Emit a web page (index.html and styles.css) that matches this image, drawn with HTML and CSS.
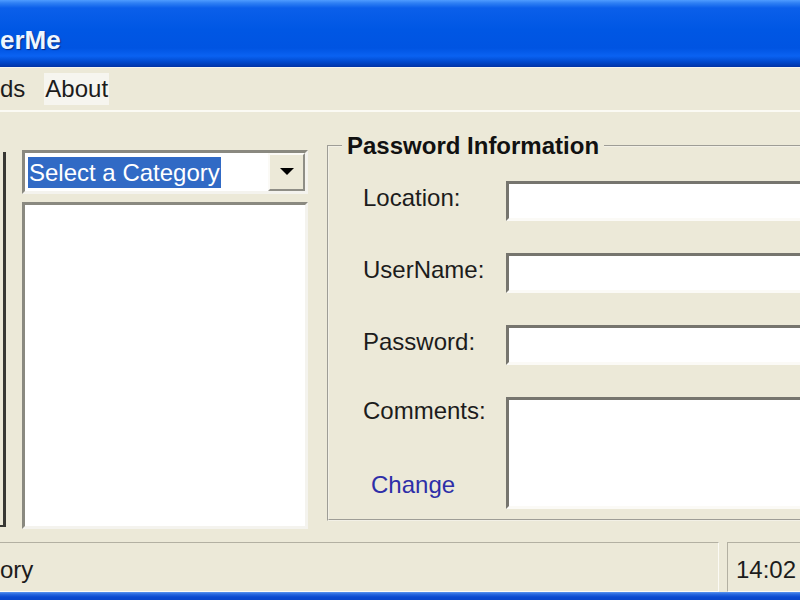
FILE: index.html
```html
<html lang="en">
<head>
    <meta charset="UTF-8">
    <meta name="viewport" content="width=device-width, initial-scale=1.0">
    <title>RememberMe</title>
    <link rel="stylesheet" href="styles.css">
</head>
<body>
    <div class="window">
        <div class="titlebar">
            <span class="title">erMe</span>
        </div>
        <div class="menubar">
            <span class="menu-item first">ds</span>
            <span class="menu-item about">About</span>
        </div>
        <div class="main">
            <div class="left-edge"></div>
            <div class="category">
                <div class="combo">
                    <span class="combo-text">Select a Category</span>
                    <span class="combo-btn">
                        <svg width="14" height="8" viewBox="0 0 14 8"><path d="M0 0H14L7 7Z" fill="#000"/></svg>
                    </span>
                </div>
                <div class="listbox"></div>
            </div>
            <fieldset class="group">
                <legend>Password Information</legend>
                <div class="fields">
                    <label>Location:</label>
                    <div class="field"></div>
                    <label>UserName:</label>
                    <div class="field"></div>
                    <label>Password:</label>
                    <div class="field"></div>
                    <div class="comment-labels">
                        <label>Comments:</label>
                        <a class="change">Change</a>
                    </div>
                    <div class="field comments"></div>
                </div>
            </fieldset>
        </div>
        <div class="statusbar">
            <div class="panel status-text">ory</div>
            <div class="panel clock">14:02</div>
        </div>
        <div class="bottom-edge"></div>
    </div>
</body>
</html>
```

FILE: styles.css
```css
body{
    margin: 0;
    background: #ECE9D8;
    color: #1c1c1c;
    font-family: "Liberation Sans", Arial, sans-serif;
    font-size: 24px;
    overflow: hidden;
}
.window{
    width: 800px;
    height: 600px;
    overflow: hidden;
    display: flex;
    flex-direction: column;
}
.titlebar{
    height: 67px;
    flex: none;
    box-sizing: border-box;
    padding-top: 13px;
    background: linear-gradient(to bottom, #4f9cff 0, #2f80f4 3px, #0b5fea 8px, #0057e4 30px, #0054e2 48px, #0a62f2 56px, #0048cc 62px, #0033a6 67px);
    display: flex;
    align-items: center;
}
.title{
    color: #eef6ff;
    font-weight: bold;
    font-size: 26px;
    margin-left: 0;
    text-shadow: 1px 1px 1px #0a2a80;
}
.menubar{
    height: 42px;
    flex: none;
    border-top: 1px solid #f4f4f0;
    border-bottom: 2px solid #fbfaf4;
    display: flex;
    align-items: center;
}
.menu-item{
    padding: 2px 1px;
}
.menu-item.first{
    margin-left: -1px;
}
.menu-item.about{
    margin-left: 18px;
    background: #f6f5ef;
}
.main{
    height: 430px;
    flex: none;
    box-sizing: border-box;
    padding-top: 22px;
    display: flex;
    align-items: flex-start;
}
.left-edge{
    width: 3px;
    height: 373px;
    margin-top: 18px;
    border-right: 3px solid #383834;
    border-bottom: 2px solid #383834;
}
.category{
    margin-left: 16px;
    margin-top: 16px;
    width: 286px;
    display: flex;
    flex-direction: column;
}
.combo{
    height: 44px;
    box-sizing: border-box;
    background: #fff;
    border: 3px solid;
    border-color: #8a8980 #f4f3ee #f4f3ee #8a8980;
    padding: 0 0 0 3px;
    display: flex;
    align-items: center;
}
.combo-text{
    background: #316AC5;
    color: #fff;
    line-height: 31px;
    padding: 0 1px 0 1px;
}
.combo-btn{
    margin-left: auto;
    width: 37px;
    height: 38px;
    box-sizing: border-box;
    background: #ECE9D8;
    border: 2px solid;
    border-color: #fbfaf6 #8f8e86 #8f8e86 #fbfaf6;
    display: flex;
    align-items: center;
    justify-content: center;
}
.listbox{
    margin-top: 8px;
    height: 327px;
    box-sizing: border-box;
    background: #fff;
    border: 3px solid;
    border-color: #8a8980 #f4f3ee #f4f3ee #8a8980;
}
.group{
    margin: 0 -40px 0 19px;
    padding: 0;
    flex: 1;
    border: 2px groove #f2f0e6;
}
.group legend{
    margin-left: 13px;
    padding: 0 5px;
    font-weight: bold;
    font-size: 24px;
    line-height: 24px;
    color: #111;
}
.fields{
    display: grid;
    grid-template-columns: 143px 1fr;
    row-gap: 32px;
    padding: 23px 0 10px 34px;
}
.fields label{
    align-self: center;
    padding-bottom: 6px;
}
.field{
    height: 40px;
    box-sizing: border-box;
    background: #fff;
    border: 3px solid;
    border-color: #76756e #fbfaf6 #fbfaf6 #76756e;
}
.field.comments{
    height: 112px;
}
.comment-labels{
    display: flex;
    flex-direction: column;
    align-items: flex-start;
    justify-content: space-between;
    padding: 0 0 10px;
}
.comment-labels label{
    align-self: flex-start;
    padding: 0;
}
.change{
    color: #2e2ea8;
    margin-left: 8px;
}
.statusbar{
    height: 50px;
    flex: none;
    display: flex;
    gap: 8px;
}
.panel{
    box-sizing: border-box;
    height: 50px;
    border: 1px solid;
    border-color: #b3b0a2 #fbfaf4 #fbfaf4 #b3b0a2;
    display: flex;
    align-items: center;
}
.status-text{
    flex: 1;
    border-left: none;
    padding-top: 6px;
}
.clock{
    flex: none;
    width: 90px;
    padding: 6px 0 0 8px;
    margin-right: -17px;
}
.bottom-edge{
    height: 11px;
    flex: none;
    background: linear-gradient(to bottom, #5a95f0 0, #2a6ae0 2px, #0a4ad0 5px, #0842c4 11px);
}
```
